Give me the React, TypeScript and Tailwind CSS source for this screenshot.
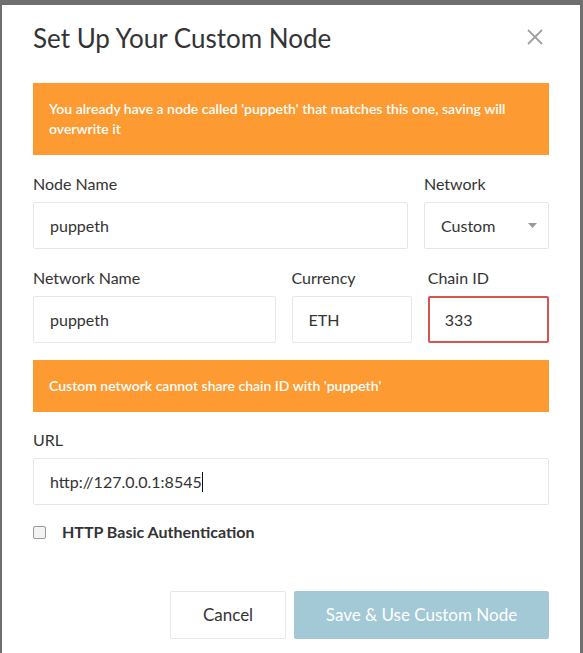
import React from 'react';

const Field: React.FC<{ label: string; value: string; error?: boolean; caret?: boolean }> = ({ label, value, error, caret }) => (
  <div className="min-w-0">
    <div className="mb-[7px] text-[16px] leading-[22px] text-[#333]">{label}</div>
    <div
      className={
        error
          ? 'flex h-[47px] items-center rounded-[2px] border-2 border-[#d9534f] px-[15px] text-[16px] text-[#333]'
          : 'flex h-[47px] items-center rounded-[2px] border border-[#e3e7ec] px-4 text-[16px] text-[#333]'
      }
    >
      {value}
      {caret && <span className="inline-block h-[20px] w-px bg-[#111]" />}
    </div>
  </div>
);

export default function App() {
  return (
    <div className="h-[653px] overflow-hidden bg-[#6f6f6f] pt-[5px] pl-[2px] pr-[3px]" style={{ fontFamily: 'Lato, "Open Sans", sans-serif' }}>
      <div className="h-[700px] bg-white px-[31px]">
        {/* Header */}
        <div className="flex items-center justify-between pt-[17px]">
          <h1 className="text-[26px] leading-[32px] text-[#333]">Set Up Your Custom Node</h1>
          <button className="mr-[6px] -mt-[3px] text-[#a0a0a0]">
            <svg width="16" height="16" viewBox="0 0 16 16" stroke="currentColor" strokeWidth="1.8">
              <line x1="1" y1="1" x2="15" y2="15" />
              <line x1="15" y1="1" x2="1" y2="15" />
            </svg>
          </button>
        </div>

        <div className="mt-[29px] bg-[#fd9a32] px-4 py-4 text-[14px] font-semibold leading-[20px] text-white">
          You already have a node called 'puppeth' that matches this one, saving will overwrite it
        </div>

        {/* Node name + network */}
        <div className="mt-[18px] grid grid-cols-[3fr_1fr] gap-4">
          <Field label="Node Name" value="puppeth" />
          <div>
            <div className="mb-[7px] text-[16px] leading-[22px] text-[#333]">Network</div>
            <div className="flex h-[47px] items-center justify-between rounded-[2px] border border-[#e3e7ec] pl-4 pr-[11px] text-[16px] text-[#333]">
              Custom
              <svg width="9" height="5" viewBox="0 0 9 5">
                <path d="M0 0h9L4.5 5z" fill="#999" />
              </svg>
            </div>
          </div>
        </div>

        <div className="mt-[18px] grid grid-cols-[242fr_120fr_121fr] gap-4">
          <Field label="Network Name" value="puppeth" />
          <Field label="Currency" value="ETH" />
          <Field label="Chain ID" value="333" error />
        </div>

        <div className="mt-[17px] bg-[#fd9a32] px-4 py-4 text-[14px] font-semibold leading-[20px] text-white">
          Custom network cannot share chain ID with 'puppeth'
        </div>

        <div className="mt-[17px]">
          <Field label="URL" value="http://127.0.0.1:8545" caret />
        </div>

        <label className="mt-[16px] flex items-center">
          <span className="h-[13px] w-[13px] rounded-[2px] border border-[#999] bg-[#f3f3f3]" />
          <span className="ml-[16px] text-[16px] font-bold leading-[22px] text-[#333]">HTTP Basic Authentication</span>
        </label>

        {/* Actions */}
        <div className="mt-[48px] flex justify-end gap-2">
          <button className="h-[48px] w-[116px] rounded-[2px] border border-[#e3e7ec] text-[17px] text-[#333]">Cancel</button>
          <button className="h-[48px] w-[255px] rounded-[2px] bg-[#a2c9d5] text-[17px] text-white">Save &amp; Use Custom Node</button>
        </div>
      </div>
    </div>
  );
}
